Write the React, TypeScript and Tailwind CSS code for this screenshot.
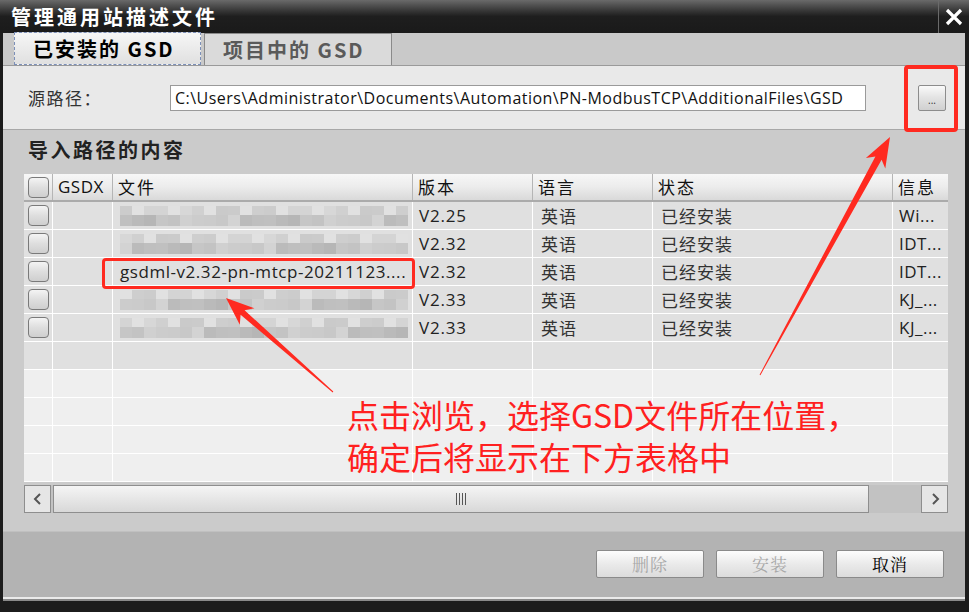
import React from 'react'

const COLS = 'grid grid-cols-[29px_60px_300px_120px_120px_240px_55px]'

const ROWS = [
  { blur: 1, version: 'V2.25', info: 'Wi...' },
  { blur: 2, version: 'V2.32', info: 'IDT...' },
  { name: 'gsdml-v2.32-pn-mtcp-20211123....', version: 'V2.32', info: 'IDT...' },
  { blur: 3, version: 'V2.33', info: 'KJ_...' },
  { blur: 4, version: 'V2.33', info: 'KJ_...' },
]

const SHADES = ['#c4c4c4', '#b8b8b8', '#cfcfcf', '#bdbdbd', '#c9c9c9', '#b2b2b2', '#d2d2d2', '#c0c0c0', '#bcbcbc', '#cacaca', '#b6b6b6', '#c6c6c6']

const CJK = { fontFamily: '"Noto Sans CJK SC", sans-serif' }

function Mosaic({ seed }: { seed: number }) {
  const cells = Array.from({ length: 24 })
  return (
    <div className="flex flex-col gap-0 blur-[0.6px] opacity-90">
      <div className="flex h-[9px]">
        {cells.map((_, i) => (
          <div key={i} className="w-[12px] h-full" style={{ background: i % 3 === seed % 3 ? '#e2e2e2' : SHADES[(i * 5 + seed) % 12] + '88' }} />
        ))}
      </div>
      <div className="flex h-[11px]">
        {cells.map((_, i) => (
          <div key={i} className="w-[12px] h-full" style={{ background: SHADES[(i * 7 + seed * 3) % 12] }} />
        ))}
      </div>
    </div>
  )
}

function Check() {
  return (
    <div className="w-[21px] h-[21px] rounded-[4px] border border-[#7a7a7a] bg-gradient-to-b from-[#f4f4f4] via-[#dedede] to-[#cfcfcf]" />
  )
}

function Btn({ label, disabled }: { label: string; disabled?: boolean }) {
  return (
    <div
      className={`w-[108px] h-[28px] flex items-center justify-center border border-[#8a8a8a] rounded-[2px] bg-gradient-to-b from-[#fdfdfd] via-[#eaeaea] to-[#dcdcdc] text-[17px] tracking-[1px] ${disabled ? 'text-[#a8a8a8]' : 'text-black'}`}
      style={{ fontFamily: '"Noto Serif CJK SC", "Noto Sans CJK SC", serif' }}
    >
      {label}
    </div>
  )
}

export default function App() {
  const sans = { fontFamily: '"Open Sans", "Noto Sans CJK SC", sans-serif' }
  return (
    <div className="relative w-[969px] h-[612px] bg-[#1c1c1c] flex flex-col overflow-hidden" style={sans}>
      {/* Title bar */}
      <div className="h-[33px] flex items-stretch bg-gradient-to-b from-[#6a6a6a] via-[#1e1e1e] to-[#1a1a1a]">
        <div className="flex-1 flex items-center pl-[11px] text-white text-[20px] font-bold tracking-[3px]" style={CJK}>
          管理通用站描述文件
        </div>
        <div className="w-[31px] border-l border-[#6a6a6a] flex items-center justify-center">
          <svg width="18" height="18" viewBox="0 0 18 18">
            <path d="M2 2 L16 16 M16 2 L2 16" stroke="white" strokeWidth="3.2" />
          </svg>
        </div>
      </div>

      <div className="ml-[3px] mr-[4px] flex flex-col">
        {/* Tabs */}
        <div className="h-[33px] bg-[#c9c9c9] border-b border-[#9a9a9a] flex items-end pl-[11px] gap-[3px]">
          <div className="w-[187px] h-[33px] bg-gradient-to-b from-[#f6f6f6] to-[#e0e0e0] border border-dashed border-[#7b8fb8] flex items-center pl-[18px] text-[20px] font-bold text-black tracking-[2px]" style={CJK}>
            已安装的 GSD
          </div>
          <div className="w-[188px] h-[32px] bg-[#dadada] border border-[#8a8a8a] border-b-0 flex items-center pl-[18px] text-[20px] font-bold text-[#5a5a5a] tracking-[2px]" style={CJK}>
            项目中的 GSD
          </div>
        </div>

        {/* Source path */}
        <div className="h-[64px] bg-[#e9e9e9] border-b border-[#a8a8a8] flex items-center">
          <div className="w-[167px] pl-[25px] text-[17px] tracking-[1.5px] text-[#333]" style={CJK}>源路径：</div>
          <div className="w-[696px] h-[26px] bg-white border border-[#9a9a9a] flex items-center pl-[4px] text-[16px] text-[#111] tracking-[0.48px] whitespace-nowrap overflow-hidden">
            C:\Users\Administrator\Documents\Automation\PN-ModbusTCP\AdditionalFiles\GSD
          </div>
          <div className="ml-[52px] w-[28px] h-[26px] border border-[#8c8c8c] rounded-[2px] bg-gradient-to-b from-[#fafafa] via-[#e2e2e2] to-[#d0d0d0] flex items-end justify-center pb-[5px] text-[10px] leading-none text-[#333]">
            ...
          </div>
        </div>

        {/* Content list */}
        <div className="h-[401px] bg-[#cbcbcb] flex flex-col pl-[21px] pr-[15px]">
          <div className="h-[44px] flex items-start pl-[4px] pt-[5px] text-[20px] font-bold text-[#222] tracking-[2.5px]" style={CJK}>
            导入路径的内容
          </div>
          <div className="w-[924px] flex flex-col">
            {/* Header */}
            <div className={`${COLS} h-[28px] bg-gradient-to-b from-[#f7f7f7] via-[#ececec] to-[#d9d9d9] border-b-2 border-[#ababab] text-[17px] text-[#111]`}>
              <div className="flex items-center justify-center border-r border-[#b5b5b5]"><Check /></div>
              <div className="flex items-center pl-[5px] border-r border-[#b5b5b5] tracking-[0.5px]">GSDX</div>
              <div className="flex items-center pl-[5px] border-r border-[#b5b5b5] tracking-[2px]" style={CJK}>文件</div>
              <div className="flex items-center pl-[5px] border-r border-[#b5b5b5] tracking-[2px]" style={CJK}>版本</div>
              <div className="flex items-center pl-[5px] border-r border-[#b5b5b5] tracking-[2px]" style={CJK}>语言</div>
              <div className="flex items-center pl-[5px] border-r border-[#b5b5b5] tracking-[2px]" style={CJK}>状态</div>
              <div className="flex items-center pl-[5px] tracking-[2px]" style={CJK}>信息</div>
            </div>
            {/* Rows */}
            {ROWS.map((r, i) => (
              <div key={i} className={`${COLS} h-[28px] bg-[#e0e0e0] border-b border-white text-[17px] text-[#222]`}>
                <div className="flex items-center justify-center border-r border-white"><Check /></div>
                <div className="border-r border-white" />
                <div className="flex items-center pl-[7px] border-r border-white overflow-hidden whitespace-nowrap tracking-[0.55px]">
                  {r.name ? r.name : <Mosaic seed={r.blur ?? 0} />}
                </div>
                <div className="flex items-center pl-[6px] border-r border-white tracking-[0.8px]">{r.version}</div>
                <div className="flex items-center pl-[8px] border-r border-white text-[#333] tracking-[1px]" style={CJK}>英语</div>
                <div className="flex items-center pl-[8px] border-r border-white text-[#333] tracking-[1px]" style={CJK}>已经安装</div>
                <div className="flex items-center pl-[6px] tracking-[0.5px]">{r.info}</div>
              </div>
            ))}
            {Array.from({ length: 5 }).map((_, i) => (
              <div key={i} className={`${COLS} h-[28px] ${i === 0 ? 'bg-[#e0e0e0]' : 'bg-[#efefef]'} border-b border-white`}>
                <div className="border-r border-white" />
                <div className="border-r border-white" />
                <div className="border-r border-white" />
                <div className="border-r border-white" />
                <div className="border-r border-white" />
                <div className="border-r border-white" />
                <div />
              </div>
            ))}
            {/* Horizontal scrollbar */}
            <div className="h-[28px] mt-[3px] flex items-stretch bg-[#c2c2c2]">
              <div className="w-[27px] border border-[#8e8e8e] bg-[#e6e6e6] flex items-center justify-center">
                <svg width="10" height="14" viewBox="0 0 10 14"><path d="M7 2 L2 7 L7 12" fill="none" stroke="#555" strokeWidth="2" /></svg>
              </div>
              <div className="ml-[2px] w-[816px] border border-[#8e8e8e] bg-gradient-to-b from-[#f5f5f5] to-[#d8d8d8] flex items-center justify-end pr-[402px]">
                <div className="flex gap-[2px] h-[12px]">
                  <div className="w-px bg-[#555]" /><div className="w-px bg-[#555]" /><div className="w-px bg-[#555]" /><div className="w-px bg-[#555]" />
                </div>
              </div>
              <div className="flex-1" />
              <div className="w-[27px] border border-[#8e8e8e] bg-[#e6e6e6] flex items-center justify-center">
                <svg width="10" height="14" viewBox="0 0 10 14"><path d="M3 2 L8 7 L3 12" fill="none" stroke="#555" strokeWidth="2" /></svg>
              </div>
            </div>
          </div>
        </div>

        {/* Buttons */}
        <div className="h-[66px] bg-[#b3b3b3] border-t border-[#c0c0c0] flex items-center justify-end gap-[12px] pr-[21px] pb-[2px]">
          <Btn label="删除" disabled />
          <Btn label="安装" disabled />
          <Btn label="取消" />
        </div>
        <div className="h-[2px] bg-[#eaeaea]" />
        <div className="h-[2px] bg-[#8a8a8a]" />
      </div>

      {/* Annotation overlay */}
      <div className="absolute left-[904px] top-[65px] w-[54px] h-[67px] border-[4px] border-[#ff2a20] rounded-[4px] pointer-events-none" />
      <div className="absolute left-[102px] top-[258px] w-[313px] h-[31px] border-[3px] border-[#ff2a20] rounded-[4px] pointer-events-none" />
      <svg className="absolute left-0 top-0 pointer-events-none" width="969" height="612" viewBox="0 0 969 612">
        <polygon points="333.3,391.6 244.6,310.2 254.4,308.2 226,298 239.8,324.8 240.6,314.8 332.7,392.4" fill="#ff2a20" />
        <polygon points="760.4,375.2 881.6,159.8 885.3,168.6 890,137 865.9,158 875.4,156.4 759.6,374.8" fill="#ff2a20" />
      </svg>
      <div className="absolute left-[347px] top-[393px] text-[32px] leading-[42px] text-[#ff2020] pointer-events-none" style={CJK}>
        <div>点击浏览，选择GSD文件所在位置，</div>
        <div>确定后将显示在下方表格中</div>
      </div>
    </div>
  )
}
